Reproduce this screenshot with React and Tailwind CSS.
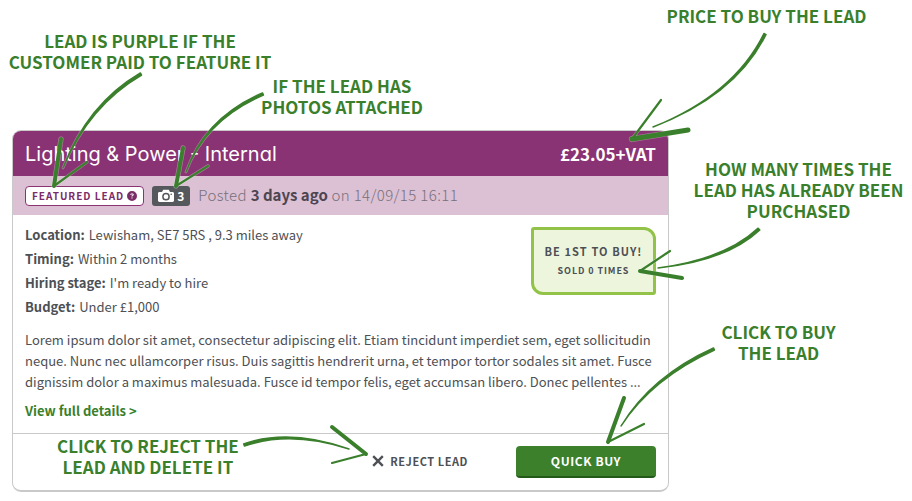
import React from "react";
import { FaCircleQuestion } from "react-icons/fa6";

const DETAILS = [
  { label: "Location:", value: "Lewisham, SE7 5RS , 9.3 miles away" },
  { label: "Timing:", value: "Within 2 months" },
  { label: "Hiring stage:", value: "I'm ready to hire" },
  { label: "Budget:", value: "Under £1,000" },
];

// from/ctrl/to describe the curved shaft, tip/thick/thin the arrow head
const ARROWS = [
  { from: [141, 74], ctrl: [88, 105], to: [63, 168], tip: [54, 186], thick: [61, 139], thin: [87, 162], weight: 4 },
  { from: [263, 94], ctrl: [205, 119], to: [186, 172], tip: [176, 186], thick: [183, 148], thin: [208, 166], weight: 4 },
  { from: [765, 34], ctrl: [735, 95], to: [653, 127], tip: [632, 139], thick: [688, 130], thin: [661, 100], weight: 5 },
  { from: [759, 229], ctrl: [726, 260], to: [658, 268], tip: [640, 271], thick: [682, 278], thin: [670, 251], weight: 4 },
  { from: [714, 349], ctrl: [652, 377], to: [621, 426], tip: [608, 442], thick: [624, 398], thin: [644, 424], weight: 4 },
  { from: [244, 445], ctrl: [290, 429], to: [349, 449], tip: [366, 454], thick: [332, 427], thin: [332, 463], weight: 4 },
];

const Arrow = ({ from, ctrl, to, tip, thick, thin, weight }) => {
  const dx = ctrl[0] - from[0];
  const dy = ctrl[1] - from[1];
  const len = Math.hypot(dx, dy);
  const nx = (-dy / len) * 1.2;
  const ny = (dx / len) * 1.2;
  const shaft =
    `M${from[0] + nx} ${from[1] + ny} Q${ctrl[0] + nx} ${ctrl[1] + ny} ${to[0]} ${to[1]} ` +
    `Q${ctrl[0] - nx} ${ctrl[1] - ny} ${from[0] - nx} ${from[1] - ny}Z`;
  const thinLine = `M${thin.join(" ")} L${tip.join(" ")}`;
  const thickLine = `M${thick.join(" ")} L${tip.join(" ")}`;
  return (
    <g strokeLinecap="round" strokeLinejoin="round">
      {/* pale edge so the arrow stays readable on the purple header */}
      <g stroke="#fff" strokeOpacity="0.35">
        <path d={shaft} strokeWidth="2.6" />
        <path d={thinLine} strokeWidth="3.4" />
        <path d={thickLine} strokeWidth={weight + 1.2} />
      </g>
      <g stroke="#3a7f2b">
        <path d={shaft} fill="#3a7f2b" strokeWidth="1.4" />
        <path d={thinLine} strokeWidth="2.2" />
        <path d={thickLine} strokeWidth={weight} />
      </g>
    </g>
  );
};

const Note = ({ lines, className = "" }) => (
  <p className={`flex flex-col items-center text-[17px] leading-[21px] font-bold text-[#3a7f2b] whitespace-nowrap ${className}`}>
    {lines.map(line => (
      <span key={line}>{line}</span>
    ))}
  </p>
);

const CameraIcon = () => (
  <svg className="w-4 h-3.5" viewBox="0 0 16 14">
    <path d="M1.5 3H4l1.2-2.2h5.6L12 3h2.5c.8 0 1.5.6 1.5 1.400v7.200c0 .8-.7 1.400-1.500 1.400h-13C.7 13 0 12.400 0 11.600V4.400C0 3.600.7 3 1.500 3z" fill="#fff" />
    <circle cx="8" cy="7.700" r="3.100" fill="none" stroke="#55585c" strokeWidth="1.500" />
    <circle cx="13.200" cy="5.300" r=".8" fill="#55585c" />
  </svg>
);

const LeadCard = () => (
  <article className="rounded-[9px] border border-b-2 border-[#c9c9c9] bg-white overflow-hidden text-[#4d5054]">
    <header className="flex items-center justify-between h-[45px] px-3 bg-[#8a3374] text-white">
      <h1 className="font-['Inter'] text-xl [font-feature-settings:'cv11']">Lighting &amp; Power - Internal</h1>
      <span className="text-[17px] font-bold">£23.05+VAT</span>
    </header>

    <div className="flex items-center h-[39px] px-3 bg-[#dcc0d4]">
      <button className="flex items-center gap-[3px] h-5 px-1.5 rounded-sm border border-[#8a3374] bg-white text-[#7b2d68] text-[10px] font-bold tracking-widest whitespace-nowrap">
        FEATURED LEAD <FaCircleQuestion className="w-2.5 h-2.5" />
      </button>
      <span className="flex items-center gap-[3px] h-5 ml-2 px-1.5 rounded-[3px] bg-[#55585c] text-white text-xs font-bold">
        <CameraIcon /> 3
      </span>
      <p className="ml-2 text-[15px] font-light tracking-wide text-[#77707a]">
        Posted <strong className="font-bold tracking-normal text-[#4d4650]">3 days ago</strong> on 14/09/15 16:11
      </p>
    </div>

    <div className="px-3 pt-2 pb-3">
      <div className="flex items-start justify-between">
        <dl className="text-[13px] leading-6">
          {DETAILS.map(({ label, value }) => (
            <div key={label} className="flex gap-1">
              <dt className="font-bold">{label}</dt>
              <dd>{value}</dd>
            </div>
          ))}
        </dl>
        <div className="mt-1 w-[125px] h-[68px] flex flex-col items-center justify-center rounded-tl-[3px] rounded-tr-xl rounded-br-[3px] rounded-bl-xl border-3 border-[#92c348] bg-[#edf6dd] font-bold whitespace-nowrap">
          <span className="text-[11px] leading-5 tracking-widest">BE 1ST TO BUY!</span>
          <span className="text-[9px] leading-5 tracking-widest">SOLD 0 TIMES</span>
        </div>
      </div>
      <p className="mt-2.5 text-[13px] leading-[21px]">
        Lorem ipsum dolor sit amet, consectetur adipiscing elit. Etiam tincidunt imperdiet sem, eget sollicitudin
        neque. Nunc nec ullamcorper risus. Duis sagittis hendrerit urna, et tempor tortor sodales sit amet. Fusce
        dignissim dolor a maximus malesuada. Fusce id tempor felis, eget accumsan libero. Donec pellentes ...
      </p>
      <a href="#details" className="block mt-[9px] text-[13px] leading-5 font-bold text-[#3a7f2b]">View full details &gt;</a>
    </div>

    <footer className="flex items-start border-t border-[#c9c9c9] px-3 pb-3">
      <Note lines={["CLICK TO REJECT THE", "LEAD AND DELETE IT"]} className="ml-8 mt-px" />
      <button className="flex items-center gap-1.5 ml-auto mt-3 h-[30px] text-[11px] font-bold tracking-wider">
        <svg className="w-3 h-3" viewBox="0 0 10 10">
          <path d="M1 1l8 8M9 1l-8 8" stroke="#4d5054" strokeWidth="2" />
        </svg>
        REJECT LEAD
      </button>
      <button className="ml-12 mt-3 w-[140px] h-8 rounded border-b-2 border-[#245a19] bg-[#3c802c] text-white text-xs font-bold tracking-wider">
        QUICK BUY
      </button>
    </footer>
  </article>
);

export default function App() {
  return (
    <main className="relative min-h-screen bg-white pl-3 font-['Noto_Sans_CJK_SC','Noto_Sans',sans-serif]">
      <div className="grid grid-cols-[minmax(0,657px)_minmax(0,243px)]">
        <div className="flex items-start h-[130px]">
          <Note lines={["LEAD IS PURPLE IF THE", "CUSTOMER PAID TO FEATURE IT"]} className="w-64 mt-[30px]" />
          <Note lines={["IF THE LEAD HAS", "PHOTOS ATTACHED"]} className="w-[148px] mt-[75px]" />
        </div>
        <Note lines={["PRICE TO BUY THE LEAD"]} className="mt-[5px] pr-12" />

        <LeadCard />
        <div className="flex flex-col gap-[100px] pt-7">
          <Note lines={["HOW MANY TIMES THE", "LEAD HAS ALREADY BEEN", "PURCHASED"]} className="pl-4" />
          <Note lines={["CLICK TO BUY", "THE LEAD"]} className="pr-6" />
        </div>
      </div>

      {/* Arrows drawn over the card */}
      <svg className="absolute top-0 left-0 pointer-events-none" width="912" height="501" viewBox="0 0 912 501" fill="none" aria-hidden="true">
        {ARROWS.map((arrow, i) => (
          <Arrow key={i} {...arrow} />
        ))}
      </svg>
    </main>
  );
}
